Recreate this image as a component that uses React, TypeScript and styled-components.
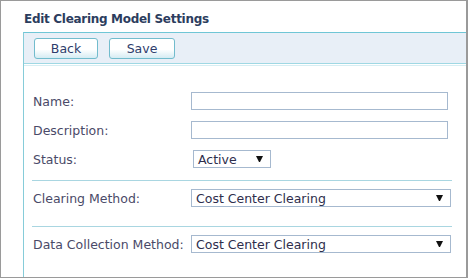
import React from "react"
import styled, { createGlobalStyle } from "styled-components"

const GlobalStyle = createGlobalStyle`
    html, body {
        margin: 0;
        padding: 0;
        background: #ffffff;
    }
    body {
        font-family: "DejaVu Sans", Verdana, sans-serif;
    }
`

const Frame = styled.div`
    width: 468px;
    height: 278px;
    box-sizing: border-box;
    border: 1px solid #9a9a9a;
    border-right-width: 2px;
    padding-left: 22px;
    display: flex;
    flex-direction: column;
    overflow: hidden;
`
const Title = styled.h1`
    margin: 0;
    height: 31px;
    box-sizing: border-box;
    padding: 11px 0 0 1px;
    font-size: 12px;
    line-height: 15px;
    letter-spacing: -0.3px;
    font-weight: bold;
    color: #2c3d5e;
    white-space: nowrap;
`
const Panel = styled.div`
    flex: 1;
    border-left: 1px solid #86ccd9;
    border-top: 1px solid #6fc6d6;
    display: flex;
    flex-direction: column;
`
const Toolbar = styled.div`
    height: 31px;
    box-sizing: border-box;
    padding: 5px 0 0 10px;
    background: #e8eff7;
    border-bottom: 1px solid #9fd8e3;
    display: flex;
    gap: 11px;
    align-items: flex-start;
`
const Button = styled.button<{ $w: number }>`
    width: ${(p) => p.$w}px;
    height: 21px;
    margin: 0;
    padding: 0;
    border: 1px solid #72bccd;
    border-radius: 3px;
    background: linear-gradient(#ffffff 55%, #d5ecf3);
    font-family: "DejaVu Sans", Verdana, sans-serif;
    font-size: 12.5px;
    color: #2e3d6c;
`
const Form = styled.div`
    margin-top: 1px;
    border-top: 1px solid #d6eef3;
    padding: 26px 0 0 9px;
`
const Rows = styled.div`
    display: grid;
    grid-template-columns: 158px auto;
    grid-auto-rows: 18px;
    row-gap: 11px;
    align-items: center;
`
const Row = styled.div<{ $top?: number }>`
    display: grid;
    grid-template-columns: 158px auto;
    height: 18px;
    align-items: center;
    margin-top: ${(p) => p.$top ?? 0}px;
`
const Label = styled.label`
    font-size: 12.5px;
    color: #4a4a68;
    white-space: nowrap;
`
const TextInput = styled.input`
    width: 257px;
    height: 18px;
    box-sizing: border-box;
    margin: 0;
    border: 1px solid #a6b9cf;
    padding: 0 4px;
    font-family: "DejaVu Sans", Verdana, sans-serif;
    font-size: 12.5px;
    outline: none;
`
const Select = styled.div<{ $w: number; $offset?: number }>`
    width: ${(p) => p.$w}px;
    height: 18px;
    box-sizing: border-box;
    margin-left: ${(p) => p.$offset ?? 0}px;
    border: 1px solid #a6b9cf;
    padding: 0 7px 0 4px;
    display: flex;
    align-items: center;
    justify-content: space-between;
    font-size: 12.5px;
    color: #2e2e4c;
    white-space: nowrap;
`
const Rule = styled.div<{ $top: number }>`
    height: 1px;
    width: 420px;
    margin: ${(p) => p.$top}px 0 0 -1px;
    background: #a9d6e1;
`

const Arrow = () => (
    <svg width="7" height="7" viewBox="0 0 7 7">
        <polygon points="0,0 7,0 4,6 3,6" fill="#111" />
    </svg>
)

const App = () => {
    return (
        <>
            <GlobalStyle />
            <Frame>
                <Title>Edit Clearing Model Settings</Title>
                <Panel>
                    <Toolbar>
                        <Button $w={64}>Back</Button>
                        <Button $w={66}>Save</Button>
                    </Toolbar>
                    <Form>
                        <Rows>
                            <Label>Name:</Label>
                            <TextInput />
                            <Label>Description:</Label>
                            <TextInput />
                            <Label>Status:</Label>
                            <Select $w={78} $offset={2}>
                                Active
                                <Arrow />
                            </Select>
                        </Rows>
                        <Rule $top={12} />
                        <Row $top={8}>
                            <Label>Clearing Method:</Label>
                            <Select $w={260}>
                                Cost Center Clearing
                                <Arrow />
                            </Select>
                        </Row>
                        <Rule $top={19} />
                        <Row $top={8}>
                            <Label>Data Collection Method:</Label>
                            <Select $w={260}>
                                Cost Center Clearing
                                <Arrow />
                            </Select>
                        </Row>
                    </Form>
                </Panel>
            </Frame>
        </>
    )
}

export default App
